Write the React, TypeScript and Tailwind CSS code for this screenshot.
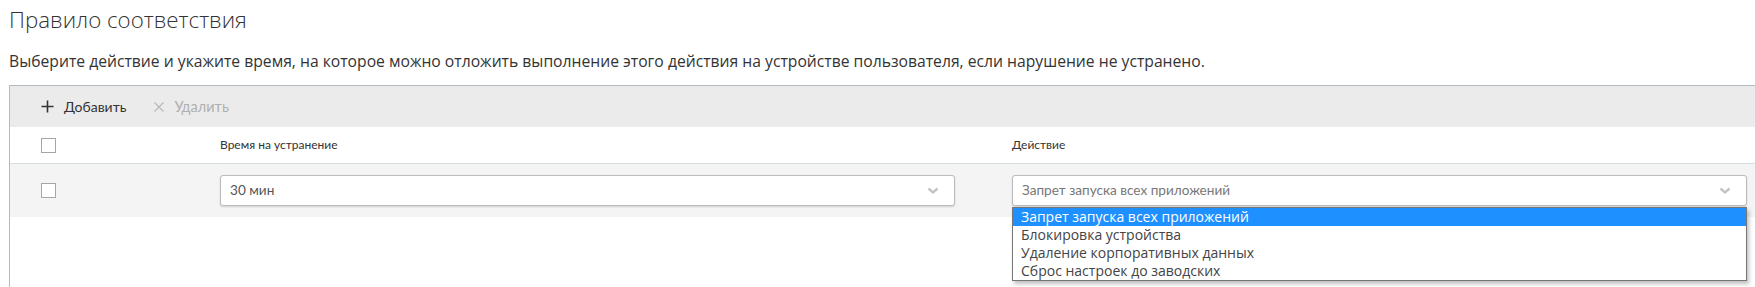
import React from "react";

function Chevron() {
  return (
    <svg width="12" height="8" viewBox="0 0 12 8" className="shrink-0">
      <path d="M1.5 1.5 L6 5.5 L10.5 1.5" fill="none" stroke="#c4c4c4" strokeWidth="2.4" />
    </svg>
  );
}

function Checkbox() {
  return <div className="w-[15px] h-[15px] border border-[#a6a6a6] bg-white box-border" />;
}

export default function App() {
  const options = [
    "Запрет запуска всех приложений",
    "Блокировка устройства",
    "Удаление корпоративных данных",
    "Сброс настроек до заводских",
  ];
  return (
    <div className="w-[1755px] h-[287px] bg-white overflow-hidden relative" style={{ fontFamily: '"Open Sans", "Noto Sans", sans-serif' }}>
      <div className="pl-[9px] pt-[5px] text-[22.3px] leading-[29px] text-[#333] font-light">
        Правило соответствия
      </div>
      <div className="pl-[9px] pt-[17px] text-[15.7px] leading-[21px] text-[#333]">
        Выберите действие и укажите время, на которое можно отложить выполнение этого действия на устройстве пользователя, если нарушение не устранено.
      </div>
      <div className="ml-[9px] mt-[13px] w-[1760px] h-[300px] border-l border-t border-[#b3bac0]" style={{ fontFamily: 'Lato, "Noto Sans", sans-serif' }}>
        <div className="h-[41px] bg-[#ebebeb] flex items-center pl-[31px]">
          <div className="flex items-center gap-[10px] text-[14px] text-[#333]">
            <svg width="13" height="13" viewBox="0 0 13 13">
              <path d="M6.5 0.5 V12.5 M0.5 6.5 H12.5" stroke="#333" strokeWidth="1.6" />
            </svg>
            <span>Добавить</span>
          </div>
          <div className="flex items-center gap-[10px] text-[14.5px] text-[#b0b0b0] ml-[28px]">
            <svg width="10" height="10" viewBox="0 0 10 10">
              <path d="M0.5 0.5 L9.5 9.5 M9.5 0.5 L0.5 9.5" stroke="#b8b8b8" strokeWidth="1.1" />
            </svg>
            <span>Удалить</span>
          </div>
        </div>
        <div className="h-[37px] bg-white flex items-center border-b border-[#d6dee2] text-[12px] text-[#333]">
          <div className="w-[210px] pl-[31px]"><Checkbox /></div>
          <div className="w-[792px]">Время на устранение</div>
          <div className="w-[735px]">Действие</div>
        </div>
        <div className="h-[53px] bg-[#f4f4f4] flex items-center text-[13.6px]">
          <div className="w-[210px] pl-[31px]"><Checkbox /></div>
          <div className="w-[792px]">
            <div className="w-[735px] h-[31px] bg-white border border-[#bcbcbc] rounded-[3px] shadow-[0_1px_2px_rgba(0,0,0,0.15)] flex items-center justify-between pl-[9px] pr-[15px] text-[#555]">
              <span>30 мин</span>
              <Chevron />
            </div>
          </div>
          <div className="w-[735px] relative">
            <div className="w-[735px] h-[31px] bg-white border border-[#bcbcbc] rounded-[3px] shadow-[0_1px_2px_rgba(0,0,0,0.15)] flex items-center justify-between pl-[9px] pr-[15px] text-[#777]">
              <span>Запрет запуска всех приложений</span>
              <Chevron />
            </div>
            <div className="absolute left-0 top-[32px] w-[735px] bg-white border border-[#767676] shadow-[2px_3px_4px_rgba(0,0,0,0.25)] text-[14px] leading-[18px]" style={{ fontFamily: '"Open Sans", "Noto Sans", sans-serif' }}>
              {options.map((o, i) => (
                <div key={o} className={i === 0 ? "bg-[#1e90ff] text-white pl-[8px]" : "text-[#444] pl-[8px]"}>{o}</div>
              ))}
            </div>
          </div>
        </div>
      </div>
    </div>
  );
}
